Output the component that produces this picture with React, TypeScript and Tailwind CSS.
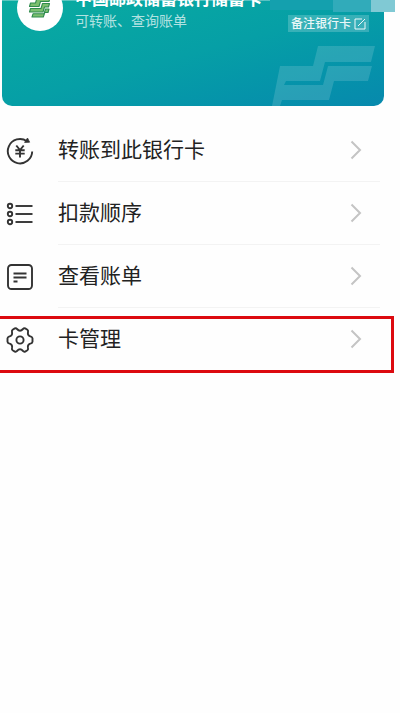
import React from 'react';

type RowProps = {
  icon: React.ReactNode;
  label: string;
  marked?: boolean;
};

const iconProps = {
  viewBox: '0 0 28 28',
  fill: 'none',
  stroke: 'currentColor',
  strokeWidth: 1.9,
  'aria-hidden': true,
  className: 'w-7 h-7',
};

const TransferIcon = () => (
  <svg {...iconProps}>
    <path d="M26.2 14.5A12.2 12.2 0 1 1 21 4.2" />
    <path d="M21.5 1 23.6 5.2 18.6 5.4Z" fill="currentColor" strokeWidth="0.8" />
    <path d="M10.3 8.5 14 13l3.7-4.5M14 13v7.5M9.3 13.2h9.4M9.3 16.6h9.4" />
  </svg>
);

const OrderIcon = () => (
  <svg {...iconProps}>
    {[6, 14, 22].map((y) => (
      <g key={y}>
        <circle cx="4" cy={y} r="2.2" />
        <path d={`M9.5 ${y}h17`} />
      </g>
    ))}
  </svg>
);

const BillIcon = () => (
  <svg {...iconProps}>
    <rect x="2" y="2" width="24" height="24" rx="3.5" />
    <path d="M7.5 10.5h13M7.5 14.5h13M7.5 18.5h4" />
  </svg>
);

const SettingsIcon = () => (
  <svg {...iconProps}>
    <path
      strokeLinejoin="round"
      d="M8.8 2.4Q10.2 1.9 11 3Q14 6.4 17 3Q17.8 1.9 19.2 2.4L21.4 3.7Q22.4 4.5 22 6Q21.2 9.8 25 10.6Q26.3 11 26.5 12.4V15.6Q26.3 17 25 17.4Q21.2 18.2 22 22Q22.4 23.5 21.4 24.3L19.2 25.6Q17.8 26.1 17 25Q14 21.6 11 25Q10.2 26.1 8.8 25.6L6.6 24.3Q5.6 23.5 6 22Q6.8 18.2 3 17.4Q1.7 17 1.5 15.6V12.4Q1.7 11 3 10.6Q6.8 9.8 6 6Q5.6 4.5 6.6 3.7Z"
    />
    <circle cx="14" cy="14" r="3.6" />
  </svg>
);

const Chevron = () => (
  <svg viewBox="0 0 12 20" fill="none" stroke="#c4c4c4" strokeWidth="2" aria-hidden className="w-3 h-5">
    <path d="M1.5 1.5 10 10l-8.5 8.5" />
  </svg>
);

const Row: React.FC<RowProps> = ({ icon, label, marked }) => (
  <li className="relative">
    <button type="button" className="flex w-full items-center pl-1.5 pr-5 text-left text-[#333]">
      {icon}
      <span
        className={`ml-6 flex h-[63px] flex-1 items-center justify-between border-b pr-[18px] ${marked ? 'border-transparent' : 'border-[#f3f3f3]'}`}
      >
        <span className="pb-1 text-[21px] leading-7 text-[#222]">{label}</span>
        <Chevron />
      </span>
    </button>
    {marked && (
      <div className="pointer-events-none absolute left-0 right-1.5 top-2 -bottom-0.5 border-y-[3px] border-r-[3px] border-[#dc0a0f]" />
    )}
  </li>
);

const BankLogo = () => (
  <svg viewBox="0 0 24 22" fill="#7cbf6e" stroke="#2f8b4d" strokeWidth="1.1" strokeLinejoin="round" aria-hidden className="h-[22px] w-6">
    <path d="M9 1H22L21 4.5H12.5L11 9.5H1.5L2.5 6H7.5Z" />
    <path d="M14.5 6.5H21.5L20.5 10H16.5L15 15H1.5L2.5 11.5H13Z" />
    <path d="M17.5 12H21L20 15.5H16.8L15.3 20H4L5 16.8H16Z" />
  </svg>
);

const BankCard = () => (
  <section className="relative ml-0.5 mr-4 h-[106px]">
    <div className="relative h-full overflow-hidden rounded-b-[10px] bg-linear-to-br from-[#0aaca0] via-[#069fa6] to-[#0789ad] shadow-[inset_0_1px_#ffffff55]">
      {/* watermark */}
      <svg viewBox="0 0 104 60" fill="#fff" fillOpacity="0.14" aria-hidden className="absolute bottom-0 right-2 h-15 w-[104px]">
        <path d="M46 0H103L99 16H53L48 35H14L12 39H51L56 20H100L96 35H62L57 54H10L8 60H0L8 20H41Z" />
      </svg>
      <div className="relative -mt-4 flex pl-[15px] pr-[15px]">
        <div className="mt-px flex size-[46px] shrink-0 items-center justify-center rounded-full bg-white">
          <BankLogo />
        </div>
        <div className="ml-3 min-w-0 flex-1 text-white">
          <h1 className="whitespace-nowrap pt-1 text-[17px] font-bold leading-5">中国邮政储蓄银行储蓄卡</h1>
          <p className="mt-0.5 text-sm leading-5 text-white/70">可转账、查询账单</p>
        </div>
        <button
          type="button"
          className="mt-[31px] flex h-[17px] shrink-0 items-center gap-[3px] self-start bg-white/20 px-[3px] text-xs font-medium leading-4 text-white/90"
        >
          <span className="pb-0.5">备注银行卡</span>
          <svg viewBox="0 0 12 12" fill="none" stroke="currentColor" aria-hidden className="size-3">
            <path d="M8 1H1v10h10V4M4 8l7-7" />
          </svg>
        </button>
      </div>
    </div>
    {/* mosaic strip */}
    <div className="absolute -right-[11px] top-0 flex h-3 w-[125px]">
      <div className="h-2.5 flex-1 bg-[#14a0ae]" />
      <div className="w-[38px] bg-[#31abba]" />
      <div className="w-6 bg-[#80c9d4]" />
    </div>
  </section>
);

export default function App() {
  return (
    <main className="min-h-screen overflow-x-hidden bg-[#fefefe] font-['Noto_Sans_CJK_SC',sans-serif]">
      <BankCard />
      <ul className="pt-[13px]">
        <Row icon={<TransferIcon />} label="转账到此银行卡" />
        <Row icon={<OrderIcon />} label="扣款顺序" />
        <Row icon={<BillIcon />} label="查看账单" />
        <Row icon={<SettingsIcon />} label="卡管理" marked />
      </ul>
    </main>
  );
}
